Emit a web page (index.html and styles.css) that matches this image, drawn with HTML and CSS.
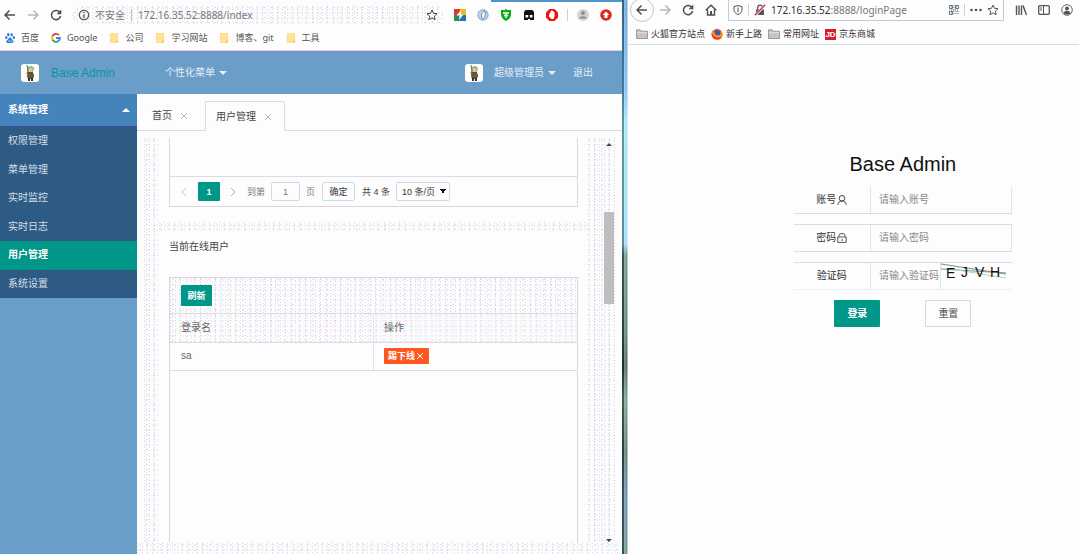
FILE: index.html
```html
<!DOCTYPE html>
<html lang="zh-CN">
<head>
<meta charset="utf-8">
<title>Base Admin</title>
<link rel="stylesheet" href="styles.css">
</head>
<body>
<svg class="defs" aria-hidden="true">
  <symbol id="back" viewBox="0 0 12 12"><path d="M11 6H1.500M5.500 1.500 1 6l4.500 4.500" fill="none" stroke="currentColor" stroke-width="1.500"/></symbol>
  <symbol id="forward" viewBox="0 0 12 12"><path d="M1 6h9.500M6.500 1.500 11 6l-4.500 4.500" fill="none" stroke="currentColor" stroke-width="1.500"/></symbol>
  <symbol id="reload" viewBox="0 0 12 12"><path d="M10 3.600A4.600 4.600 0 1 0 10.600 7" fill="none" stroke="currentColor" stroke-width="1.500"/><path d="M11.300.6v4.700H6.600z" fill="currentColor"/></symbol>
  <symbol id="star" viewBox="0 0 12 12"><path d="m6 1 1.500 3.300 3.500.4-2.600 2.400.7 3.600L6 8.900l-3.100 1.800.7-3.600L1 4.700l3.500-.4z" fill="none" stroke="currentColor"/></symbol>
  <symbol id="note" viewBox="0 0 10 11"><path d="M1 .5h8v7L7.500 10.500H1z" fill="#ffe391" stroke="#f6cf6e" stroke-width=".6"/><path d="M6.500 10.500 9.500 7.500v3z" fill="#eebb4d"/></symbol>
  <symbol id="folder" viewBox="0 0 12 10"><path d="M.5 9.500V.8H4l1 1.400h6.500v7.300z" fill="#c4c4c0" stroke="#8a8a88" stroke-width=".8"/><path d="M1 3.800h10" stroke="#e6e6e2"/></symbol>
  <symbol id="hero" viewBox="0 0 18 18"><rect width="18" height="18" rx="3" fill="#fdfdfb"/><path d="M6 5c0-3 5-4 7-1l-1 4H7z" fill="#79b48b"/><path d="M7.500 4h4v4h-4z" fill="#d9c79a"/><path d="m6 1 1 6-1 2" stroke="#596f55" fill="none"/><path d="M7 8h5l1 5-2 2H7l-1-3z" fill="#485d3b"/><path d="m6 9 3 3 4-1" stroke="#b53c31" stroke-width="1.500" fill="none"/><path d="M7 14h2v3H7zm3 0h2v3h-2z" fill="#34352f"/></symbol>
  <symbol id="cross" viewBox="0 0 8 8"><path d="m1 1 6 6m0-6L1 7" fill="none" stroke="currentColor"/></symbol>
</svg>
<div class="desktop">
  <section class="chrome">
    <div class="chrome-bar">
      <button class="icon-btn" aria-label="后退"><svg class="i12"><use href="#back"/></svg></button>
      <button class="icon-btn faded" aria-label="前进"><svg class="i12"><use href="#forward"/></svg></button>
      <button class="icon-btn" aria-label="刷新页面"><svg class="i12"><use href="#reload"/></svg></button>
      <div class="address dither">
        <svg class="i12" viewBox="0 0 12 12"><circle cx="6" cy="6" r="4.700" fill="none" stroke="#555" stroke-width="1.200"/><path d="M6 5.200V9M6 3v1.300" stroke="#555" stroke-width="1.300"/></svg>
        <span class="insecure">不安全</span><span class="url">172.16.35.52:8888/index</span>
        <svg class="i12 star"><use href="#star"/></svg>
      </div>
      <div class="extensions">
        <svg class="i12" viewBox="0 0 12 12"><path d="M0 0h6v6H0z" fill="#e3392c"/><path d="M6 0h6v6H6z" fill="#efbd16"/><path d="M0 6h6v6H0z" fill="#22925b"/><path d="M6 6h6v6H6z" fill="#2c6cbc"/><path d="M7 1 2.500 6.500h3L5 11l4.500-5.500h-3z" fill="#fff"/></svg>
        <svg class="i12" viewBox="0 0 12 12"><circle cx="6" cy="6" r="5.700" fill="#8fb0d0"/><circle cx="6" cy="6" r="4.500" fill="#c4d4e4"/><path d="M7.500 1.500C4 4 4 7 5.500 10.500 8.500 8 9 5 7.500 1.500z" fill="#fff" stroke="#5b87b5"/></svg>
        <svg class="i12" viewBox="0 0 12 12"><path d="m6 0 1.500 1H11v4.500C11 8.500 9 10.500 6 12 3 10.500 1 8.500 1 5.500V1h3.500z" fill="#0aad18"/><path d="M3 4h6M6 4v5M4 6.500h4" stroke="#fff" stroke-width="1.300"/></svg>
        <svg class="i12" viewBox="0 0 12 12"><path d="M2.500 1h7L11 3v8H1V3z" fill="#111"/><path d="M2.500 6h2.700v2.500H2.500zm4.300 0h2.700v2.500H6.800zM5 10h2v2H5z" fill="#fff"/></svg>
        <svg class="i12" viewBox="0 0 12 12"><path d="M3.500 0h5L12 3.500v5L8.500 12h-5L0 8.500v-5z" fill="#ea1510"/><path d="M3.500 4h1V2h1V1.500h1V2h1v1h1v4.500L7.500 10h-2L3 7.500V6h.5z" fill="#fff"/></svg>
        <i class="bar-line"></i>
        <svg class="i12" viewBox="0 0 12 12"><circle cx="6" cy="6" r="6" fill="#d2d3d2"/><circle cx="6" cy="4" r="2" fill="#8c8e8c"/><path d="M2 9.500c1-3 7-3 8 0z" fill="#8c8e8c"/></svg>
        <svg class="i12" viewBox="0 0 12 12"><circle cx="6" cy="6" r="5.800" fill="#d92c25"/><path d="m6 2.500 3.300 3.500H7.500v3h-3V6H2.700z" fill="#fff"/></svg>
      </div>
    </div>
    <nav class="chrome-marks">
      <a href="#"><svg class="i10" viewBox="0 0 10 10"><g fill="#2c78dc"><ellipse cx="3.300" cy="1.700" rx="1.200" ry="1.600"/><ellipse cx="6.700" cy="1.700" rx="1.200" ry="1.600"/><ellipse cx="1.200" cy="4.600" rx="1.200" ry="1.500"/><ellipse cx="8.800" cy="4.600" rx="1.200" ry="1.500"/><path d="M5 4 1.500 8c-.5 2 1 2.200 3.500 1.800C7.500 10.200 9 10 8.500 8z"/></g><path d="M3.500 7.500h1v1h-1m2.500-1v1.200h1.200V7.500" stroke="#fff" stroke-width=".5" fill="none"/></svg>百度</a>
      <a href="#"><svg class="i10" viewBox="0 0 10 10" fill="none" stroke-width="1.800"><path d="M8 2.200A4 4 0 0 0 1.500 3.200" stroke="#e34133"/><path d="M1.500 3.200a4 4 0 0 0 0 3.600" stroke="#f3b605"/><path d="M1.500 6.800A4 4 0 0 0 7.500 8" stroke="#32a350"/><path d="M7.500 8C8.500 7.200 9 6 8.900 5H5" stroke="#4080ee"/></svg>Google</a>
      <a href="#"><svg class="i10"><use href="#note"/></svg>公司</a>
      <a href="#"><svg class="i10"><use href="#note"/></svg>学习网站</a>
      <a href="#"><svg class="i10"><use href="#note"/></svg>博客、git</a>
      <a href="#"><svg class="i10"><use href="#note"/></svg>工具</a>
    </nav>
    <header class="app-head">
      <svg class="i18"><use href="#hero"/></svg>
      <a class="brand" href="#">Base Admin</a>
      <a class="head-link menu" href="#">个性化菜单<i class="caret down"></i></a>
      <svg class="i18 avatar"><use href="#hero"/></svg>
      <a class="head-link" href="#">超级管理员<i class="caret down"></i></a>
      <a class="head-link quit" href="#">退出</a>
    </header>
    <div class="app-body">
      <nav class="side">
        <a class="side-top" href="#">系统管理<i class="caret up"></i></a>
        <div class="side-sub">
          <a href="#">权限管理</a>
          <a href="#">菜单管理</a>
          <a href="#">实时监控</a>
          <a href="#">实时日志</a>
          <a class="current" href="#">用户管理</a>
          <a href="#">系统设置</a>
        </div>
      </nav>
      <main class="main">
        <div class="tabs">
          <button class="tab">首页<svg class="i8"><use href="#cross"/></svg></button>
          <button class="tab on">用户管理<svg class="i8"><use href="#cross"/></svg></button>
        </div>
        <div class="scroller dither">
          <div class="cards">
            <section class="card first">
              <div class="grid-box">
                <div class="grid-rest"></div>
                <div class="pager">
                  <button class="step" aria-label="上一页"><svg class="i10" viewBox="0 0 10 10"><path d="M7 1 3 5l4 4" fill="none" stroke="#c2bcb4"/></svg></button>
                  <button class="page">1</button>
                  <button class="step next" aria-label="下一页"><svg class="i10" viewBox="0 0 10 10"><path d="m3 1 4 4-4 4" fill="none" stroke="#aaa"/></svg></button>
                  <label class="jump">到第<input type="text" value="1">页</label>
                  <button class="sure">确定</button>
                  <span class="total">共 4 条</span>
                  <select class="limit" aria-label="每页条数"><option>10 条/页</option></select>
                </div>
              </div>
            </section>
            <section class="card second">
              <h2 class="card-title">当前在线用户</h2>
              <div class="grid-box open">
                <div class="grid-tools dither"><button class="refresh">刷新</button></div>
                <table class="users">
                  <thead class="dither"><tr><th>登录名</th><th>操作</th></tr></thead>
                  <tbody><tr><td>sa</td><td><button class="kick">踢下线<svg class="i8"><use href="#cross"/></svg></button></td></tr></tbody>
                </table>
              </div>
            </section>
          </div>
          <div class="scrollbar">
            <i class="caret small up"></i>
            <i class="thumb"></i>
            <i class="caret small down"></i>
          </div>
        </div>
        <div class="foot dither"></div>
      </main>
    </div>
  </section>
  <div class="wall"></div>
  <section class="firefox">
    <div class="fox-bar">
      <button class="icon-btn round" aria-label="后退"><svg class="i12"><use href="#back"/></svg></button>
      <button class="icon-btn faded" aria-label="前进"><svg class="i12"><use href="#forward"/></svg></button>
      <button class="icon-btn" aria-label="刷新页面"><svg class="i12"><use href="#reload"/></svg></button>
      <button class="icon-btn" aria-label="主页"><svg class="i12" viewBox="0 0 12 12"><path d="m.7 6.300 5.300-5 5.300 5M2.500 5.500V11h7V5.500" fill="none" stroke="currentColor" stroke-width="1.400"/><path d="M5 7h2v4H5z" fill="currentColor"/></svg></button>
      <div class="fox-address">
        <svg class="i10" viewBox="0 0 10 10"><path d="M5 .6 9 1.500v3C9 7 7.500 8.500 5 9.600 2.500 8.500 1 7 1 4.500v-3z" fill="none" stroke="#555"/><path d="M5 2.500v5" stroke="#555"/></svg>
        <i class="bar-line"></i>
        <svg class="i12" viewBox="0 0 12 12"><path d="M2 5.500h8V11H2z" fill="#555"/><path d="M3.700 6V3.500a2.300 2.300 0 0 1 4.600 0V6" fill="none" stroke="#555" stroke-width="1.300"/><path d="M1 11.500 11.500.5" stroke="#fff" stroke-width="2.500"/><path d="M.8 11.200 11.200.8" stroke="#df1f4b" stroke-width="1.300"/></svg>
        <span class="url"><b>172.16.35.52</b>:8888/loginPage</span>
        <svg class="i10 qr" viewBox="0 0 10 10"><path d="M.5.5h3v3h-3zm6 0h3v3h-3zm-6 6h3v3h-3z" fill="none" stroke="#66727a"/><path d="M2 2h1M7 2h2M2 8h1M5 0v10M0 5h10M7 6v4M9 6v4" stroke="#66727a" stroke-dasharray="1 1"/></svg>
        <i class="bar-line"></i>
        <svg class="i12" viewBox="0 0 12 12" fill="#555"><circle cx="1.500" cy="6" r="1.300"/><circle cx="6" cy="6" r="1.300"/><circle cx="10.500" cy="6" r="1.300"/></svg>
        <svg class="i12"><use href="#star"/></svg>
      </div>
      <div class="fox-tools">
        <svg class="i12" viewBox="0 0 12 12"><path d="M1.500 1.500v9.500M4 1.500v9.500M6.500 1.500v9.500M8 1.500l3.500 9.500" stroke="#555" stroke-width="1.400"/></svg>
        <svg class="i12" viewBox="0 0 12 12"><rect x=".7" y="1.700" width="10.600" height="8.600" rx="1.200" fill="none" stroke="#555" stroke-width="1.300"/><path d="M5.500 2v8M2 4h2M2 6h2" stroke="#555"/></svg>
        <svg class="i12" viewBox="0 0 12 12"><circle cx="6" cy="6" r="5.300" fill="none" stroke="#666"/><circle cx="6" cy="4.500" r="2" fill="#555"/><path d="M2.500 9c1-3 6-3 7 0L8 10.500H4z" fill="#555"/></svg>
      </div>
    </div>
    <nav class="fox-marks">
      <a href="#"><svg class="i12"><use href="#folder"/></svg>火狐官方站点</a>
      <a href="#"><svg class="i12" viewBox="0 0 12 12"><circle cx="6" cy="6.300" r="5.500" fill="#f2641f"/><circle cx="6.300" cy="5" r="3" fill="#3557c4"/><path d="M.8 3.500C2 3 3.500 4 4 5.500c.5 2 3 2.500 5.500 1 .8-.8.7-2.500.3-4C12.500 5 12 9 9.500 11c-3 2-9 0-8.700-7.500z" fill="#f7941a"/><path d="M.7 5c-.5 7 8 8.500 10.500 3C8 11 3 10 .7 5z" fill="#e0391f"/></svg>新手上路</a>
      <a href="#"><svg class="i12"><use href="#folder"/></svg>常用网址</a>
      <a href="#"><span class="jd">JD</span>京东商城</a>
    </nav>
    <form class="login">
      <h1>Base Admin</h1>
      <div class="field"><label for="acc">账号<svg class="i10" viewBox="0 0 10 10"><circle cx="5" cy="3.300" r="2.800" fill="none" stroke="#444"/><path d="M.8 9.800C1 7.500 2.500 6 5 6s4 1.500 4.200 3.800" fill="none" stroke="#444"/></svg></label><input id="acc" type="text" placeholder="请输入账号"></div>
      <div class="field"><label for="pwd">密码<svg class="i10" viewBox="0 0 10 10"><path d="M.8 4h8.400v5.400H.8zM2 4V2.500a3 2 0 0 1 6 0V4M5 6v2" fill="none" stroke="#555"/></svg></label><input id="pwd" type="password" placeholder="请输入密码"></div>
      <div class="field code"><label for="code">验证码</label><input id="code" class="short" type="text" placeholder="请输入验证码">
        <svg class="captcha" viewBox="0 0 66 24"><g fill="none"><path d="m0 1 65 10" stroke="#7d8890"/><path d="m0 6 65 4" stroke="#6d9b85"/><path d="m16 7 49 8" stroke="#a9dcb5"/></g><g fill="#111"><text x="5" y="15">E</text><text x="20" y="14">J</text><text x="34" y="14">V</text><text x="49" y="14">H</text></g></svg>
      </div>
      <div class="actions"><button class="go" type="button">登录</button><button class="reset" type="reset">重置</button></div>
    </form>
  </section>
</div>
</body>
</html>
```
FILE: styles.css
```css
* { box-sizing: border-box; }
body {
  margin: 0;
  background: #fdfdfd;
  color: #555;
  font: 10px/16px "Liberation Sans", "Noto Sans CJK SC", sans-serif;
}
a { color: inherit; text-decoration: none; }
button, input, select { font: inherit; color: inherit; margin: 0; padding: 0; border: 0; background: none; }
svg { display: block; flex: none; }
.defs { position: absolute; width: 0; height: 0; }
.i8 { width: 8px; height: 8px; }
.i10 { width: 10px; height: 10px; }
.i12 { width: 12px; height: 12px; }
.i18 { width: 18px; height: 18px; }

.dither {
  background:
    conic-gradient(at 1px 1px, transparent 75%, #f9c6ec 0) 0 0 / 5px 3px,
    conic-gradient(at 1px 1px, transparent 75%, #c4f1f5 0) 1px 2px / 4px 5px,
    conic-gradient(at 1px 1px, transparent 75%, #f9c6ec 0) 3px 1px / 7px 5px,
    conic-gradient(at 1px 1px, transparent 75%, #c4f1f5 0) 2px 1px / 7px 3px,
    conic-gradient(at 1px 1px, transparent 75%, #faf5c0 0) 2px 1px / 11px 5px,
    #fdfdfd;
}

.desktop { display: flex; min-height: 100vh; }
.chrome { flex: 622 1 0; min-width: 0; display: flex; flex-direction: column; }
.wall {
  width: 6px;
  background:
    linear-gradient(90deg, #0005 2px, #fff6 2px, #fff3 5px, #fff9 5px),
    linear-gradient(#4a94cb, #5fb4ee 16%, #8de0fa 22%, #8bd5f5 44%, #4d8272 46%, #3c6660 60%, #28443f 66%, #5b8d6e 72%, #3a5e5a 82%, #4678a0 90%, #4b8074);
}
.firefox { flex: 451 1 0; min-width: 0; }

.chrome-bar {
  display: flex; align-items: center; height: 30px; padding-left: 4px; color: #555;
  background: linear-gradient(90deg, transparent 79%, #4f97cb 79%) 0 0 / 100% 2px no-repeat;
}
.icon-btn { width: 12px; height: 12px; margin-right: 11px; color: #4b4e50; }
.icon-btn.faded { color: #b5b8ba; }
.address {
  flex: 1; display: flex; align-items: center; height: 18px; margin-left: -1px;
  padding: 0 6px; border-radius: 9px; font-family: "Noto Sans", "Noto Sans CJK SC", sans-serif;
}
.insecure { margin: 0 6px 0 5px; padding-right: 6px; border-right: 1px solid #c4c4c4; line-height: 12px; color: #777; }
.url { color: #777; }
.url b { font-weight: 400; color: #333; }
.address .star { margin-left: auto; color: #444; }
.extensions { display: flex; align-items: center; gap: 11px; padding: 0 10px; }
.extensions .bar-line { margin: 0 -2px; }
.bar-line { width: 1px; height: 12px; background: #c9d3da; }
.chrome-marks {
  display: flex; align-items: center; gap: 12px; height: 21px; padding: 0 5px 4px; border-bottom: 1px solid #f2bfe6;
  font: 9px/16px "Noto Sans", "Noto Sans CJK SC", sans-serif;
}
.chrome-marks a { display: flex; align-items: center; gap: 6px; }

.app-head {
  display: flex; align-items: center; height: 43px; padding: 0 29px 0 21px; background: #6b9dc9; color: #e6eef5;
}
.brand { margin-left: 12px; font-size: 12px; color: #0a9698; }
.head-link { display: flex; align-items: center; gap: 4px; }
.menu { margin-left: 50px; }
.avatar { margin: 0 11px 0 auto; }
.quit { margin-left: 17px; }
.caret { width: 0; height: 0; border: 4px solid transparent; }
.caret.down { border-top-color: currentColor; border-bottom: 0; }
.caret.up { border-bottom-color: currentColor; border-top: 0; }
.caret.small { border-width: 3px; color: #444; }
.caret.small.up { border-top: 0; }
.caret.small.down { border-bottom: 0; }

.app-body { flex: 1; display: flex; }
.side { width: 137px; background: #6b9dc9; color: #fff; }
.side-top {
  display: flex; align-items: center; justify-content: space-between; height: 33px;
  padding: 0 7px 0 8px; background: #4484bc; border-bottom: 1px solid #44509f; font-weight: 700;
}
.side-sub { display: grid; grid-template-rows: repeat(6, 1fr); height: 171px; background: #2e5b84; color: #d4dfe8; }
.side-sub a { display: flex; align-items: center; padding-left: 8px; }
.side-sub .current { background: #009688; color: #fff; font-weight: 700; }

.main { flex: 1; min-width: 0; display: flex; flex-direction: column; }
.tabs { display: flex; align-items: flex-end; height: 37px; padding: 0 0 0 4px; border-bottom: 1px solid #dcd6e6; }
.tab { display: flex; align-items: center; gap: 8px; height: 30px; padding: 0 10px; border: 1px solid transparent; border-bottom: 0; color: #444; }
.tab svg { color: #bbb; }
.tab.on { height: 30px; margin: 0 0 -1px 6px; border-color: #e0d6e6; border-radius: 2px 2px 0 0; background: #fdfdfd; }
.tab.on svg { margin-right: 2px; }

.scroller { flex: 1; display: flex; margin: 7px 7px 0 7px; }
.cards { flex: 1; display: flex; flex-direction: column; gap: 10px; padding-left: 14px; }
.card { background: #fdfdfd; padding: 0 10px 0 11px; }
.first { padding-bottom: 14px; }
.second { flex: 1; display: flex; flex-direction: column; }
.grid-box { border: 1px solid #ddd3e2; border-top: 0; }
.grid-rest { height: 39px; border-bottom: 1px solid #dcdae8; }
.pager { display: flex; align-items: center; height: 29px; padding-left: 9px; font-size: 9px; color: #777; }
.step { width: 10px; height: 10px; }
.step.next { margin-left: 8px; }
.page { width: 22px; height: 19px; margin-left: 9px; border-radius: 1px; background: #009688; color: #fff; font-weight: 700; }
.jump { display: flex; align-items: center; gap: 6px; margin-left: 9px; }
.jump input { width: 29px; height: 19px; border: 1px solid #c8dfe8; border-radius: 2px; text-align: center; }
.sure { width: 33px; height: 19px; margin-left: 7px; border: 1px solid #c8dfe8; border-radius: 2px; color: #333; }
.total { margin: 0 6px 0 7px; color: #444; }
.limit {
  appearance: none; width: 54px; height: 19px; padding-left: 5px; border: 1px solid #c8dfe8; border-radius: 2px; color: #333;
  background:
    linear-gradient(to bottom left, #111 50%, transparent 50%) 43px 6px / 3px 5px no-repeat,
    linear-gradient(to bottom right, #111 50%, transparent 50%) 46px 6px / 3px 5px no-repeat;
}
.card-title { margin: 8px 0 22px; font-size: 10px; line-height: 16px; font-weight: 400; color: #444; }
.open { flex: 1; border-top: 1px solid #ddd3e2; border-bottom: 0; }
.grid-tools { height: 36px; padding: 7px 11px; border-bottom: 1px solid #dcdcdf; }
.refresh { display: block; width: 31px; height: 21px; border-radius: 1px; background: #009688; color: #fff; font-size: 9px; font-weight: 700; }
.users { width: 100%; border-collapse: collapse; table-layout: fixed; }
.users th, .users td { height: 28px; padding: 0 11px; border-bottom: 1px solid #dcdae4; text-align: left; font-weight: 400; color: #666; }
.users th + th, .users td + td { padding-left: 10px; border-left: 1px solid #e3e0ea; }
.kick {
  display: flex; align-items: center; gap: 1px; height: 16px; padding: 0 5px 0 4px; border-radius: 1px;
  background: #ff5722; color: #fff; font-size: 9px; font-weight: 700;
}
.scrollbar { display: flex; flex-direction: column; align-items: center; width: 13px; margin-left: 14px; padding: 5px 0 1px; }
.thumb { width: 10px; height: 92px; margin: 66px 0 auto; background: #bebebe; }
.foot { height: 11px; }

.fox-bar { display: flex; align-items: center; height: 21px; padding: 0 6px 1px 8px; }
.icon-btn.round { position: relative; }
.icon-btn.round::before { content: ""; position: absolute; inset: -6px; border: 1px solid #c5c5ca; border-radius: 50%; }
.fox-address {
  flex: 1; align-self: stretch; display: flex; align-items: center; gap: 5px; margin-bottom: -1px; padding: 0 4px;
  border: solid #b9cddb; border-width: 0 1px 1px; font-family: "Noto Sans", "Noto Sans CJK SC", sans-serif;
}
.fox-address .qr { margin-left: auto; }
.fox-tools { display: flex; gap: 11px; margin-left: 11px; }
.fox-marks {
  display: flex; align-items: center; gap: 6px; height: 24px; padding: 3px 8px 0; border-bottom: 1px solid #cfe6dc; font-size: 9px; color: #333;
}
.fox-marks a { display: flex; align-items: center; gap: 3px; }
.jd { width: 11px; height: 11px; background: #d3202c; color: #fff; font: 700 8px/11px "Liberation Sans", sans-serif; text-align: center; }

.login { width: 48.5%; margin: 107px 0 0 36.7%; }
.login h1 { margin: 0 0 10px; font-size: 20px; line-height: 24px; font-weight: 400; text-align: center; color: #111; }
.field { display: flex; height: 28px; margin-bottom: 10px; border: solid #dcdae6; border-width: 1px 0; }
.field:first-of-type { border-top-color: transparent; }
.code { border-bottom-color: #f1eef5; }
.field label { flex: 0 0 35%; display: flex; align-items: center; justify-content: center; gap: 1px; color: #333; }
.field input { flex: 1; min-width: 0; padding-left: 8px; border: solid #d3e9ef; border-width: 0 1px; }
.field input::placeholder { color: #8a8a8a; opacity: 1; }
.field .short { flex: 0 0 71px; padding-left: 8px; }
.captcha { flex: 0 0 66px; height: 24px; font: 14px "Liberation Sans", sans-serif; overflow: visible; }
.actions { display: flex; justify-content: center; gap: 45px; }
.actions button { width: 46px; height: 27px; border-radius: 1px; }
.go { background: #009688; color: #fff; font-weight: 700; }
.actions .reset { border: 1px solid #c8dfe8; color: #555; }
```
